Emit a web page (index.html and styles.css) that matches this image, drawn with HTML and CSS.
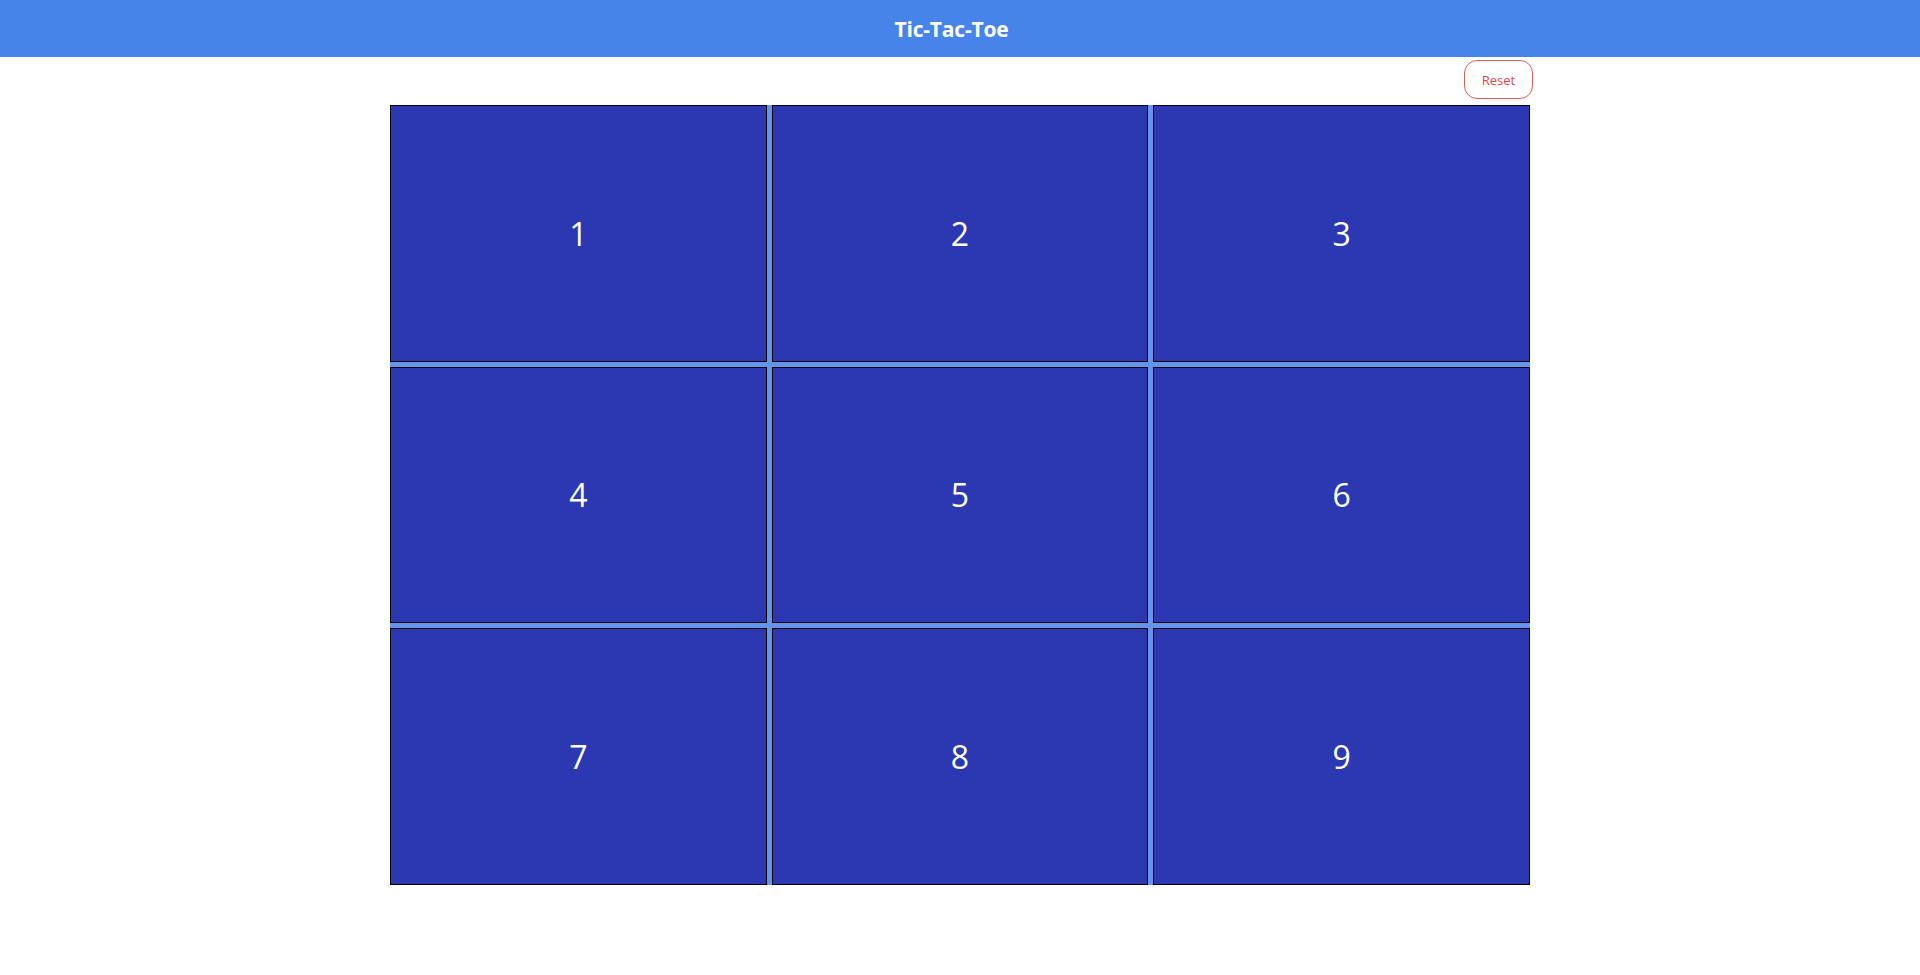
FILE: index.html
```html
<!DOCTYPE html>
<html lang="en">
<head>
<meta charset="utf-8">
<title>Tic-Tac-Toe</title>
<link rel="stylesheet" href="styles.css">
</head>
<body>
<header class="app-header">
  <h1 class="app-title">Tic-Tac-Toe</h1>
</header>
<main class="game">
  <div class="toolbar">
    <button class="reset-btn" type="button">Reset</button>
  </div>
  <div class="board">
    <div class="cell">1</div>
    <div class="cell">2</div>
    <div class="cell">3</div>
    <div class="cell">4</div>
    <div class="cell">5</div>
    <div class="cell">6</div>
    <div class="cell">7</div>
    <div class="cell">8</div>
    <div class="cell">9</div>
  </div>
</main>
</body>
</html>
```

FILE: styles.css
```css
* { box-sizing: border-box; }
html, body { margin: 0; padding: 0; background: #ffffff; }
body { font-family: "Open Sans", "Noto Sans", "Liberation Sans", sans-serif; }

.app-header {
  height: 57px;
  background: #4684ea;
  display: flex;
  align-items: center;
  justify-content: center;
  padding-right: 17px;
}
.app-title {
  margin: 0;
  color: #ffffff;
  font-size: 21px;
  font-weight: 700;
  letter-spacing: -0.2px;
}

.game {
  width: 1146px;
  margin: 0 auto;
}
.toolbar {
  display: flex;
  justify-content: flex-end;
  padding-top: 3px;
  margin-bottom: 6px;
}
.reset-btn {
  width: 69px;
  height: 39px;
  border: 1px solid #e15b5b;
  border-radius: 13px;
  background: #ffffff;
  color: #e14747;
  font-family: inherit;
  font-size: 13px;
  padding: 0;
  cursor: pointer;
}

.board {
  margin: 0 3px;
  height: 780px;
  display: grid;
  grid-template-columns: repeat(3, 1fr);
  grid-template-rows: repeat(3, 1fr);
  gap: 5px;
  background: #6495ed;
}
.cell {
  background: #2b38b1;
  border: 1px solid #000000;
  color: #ffffff;
  font-size: 32px;
  display: flex;
  align-items: center;
  justify-content: center;
}
```
